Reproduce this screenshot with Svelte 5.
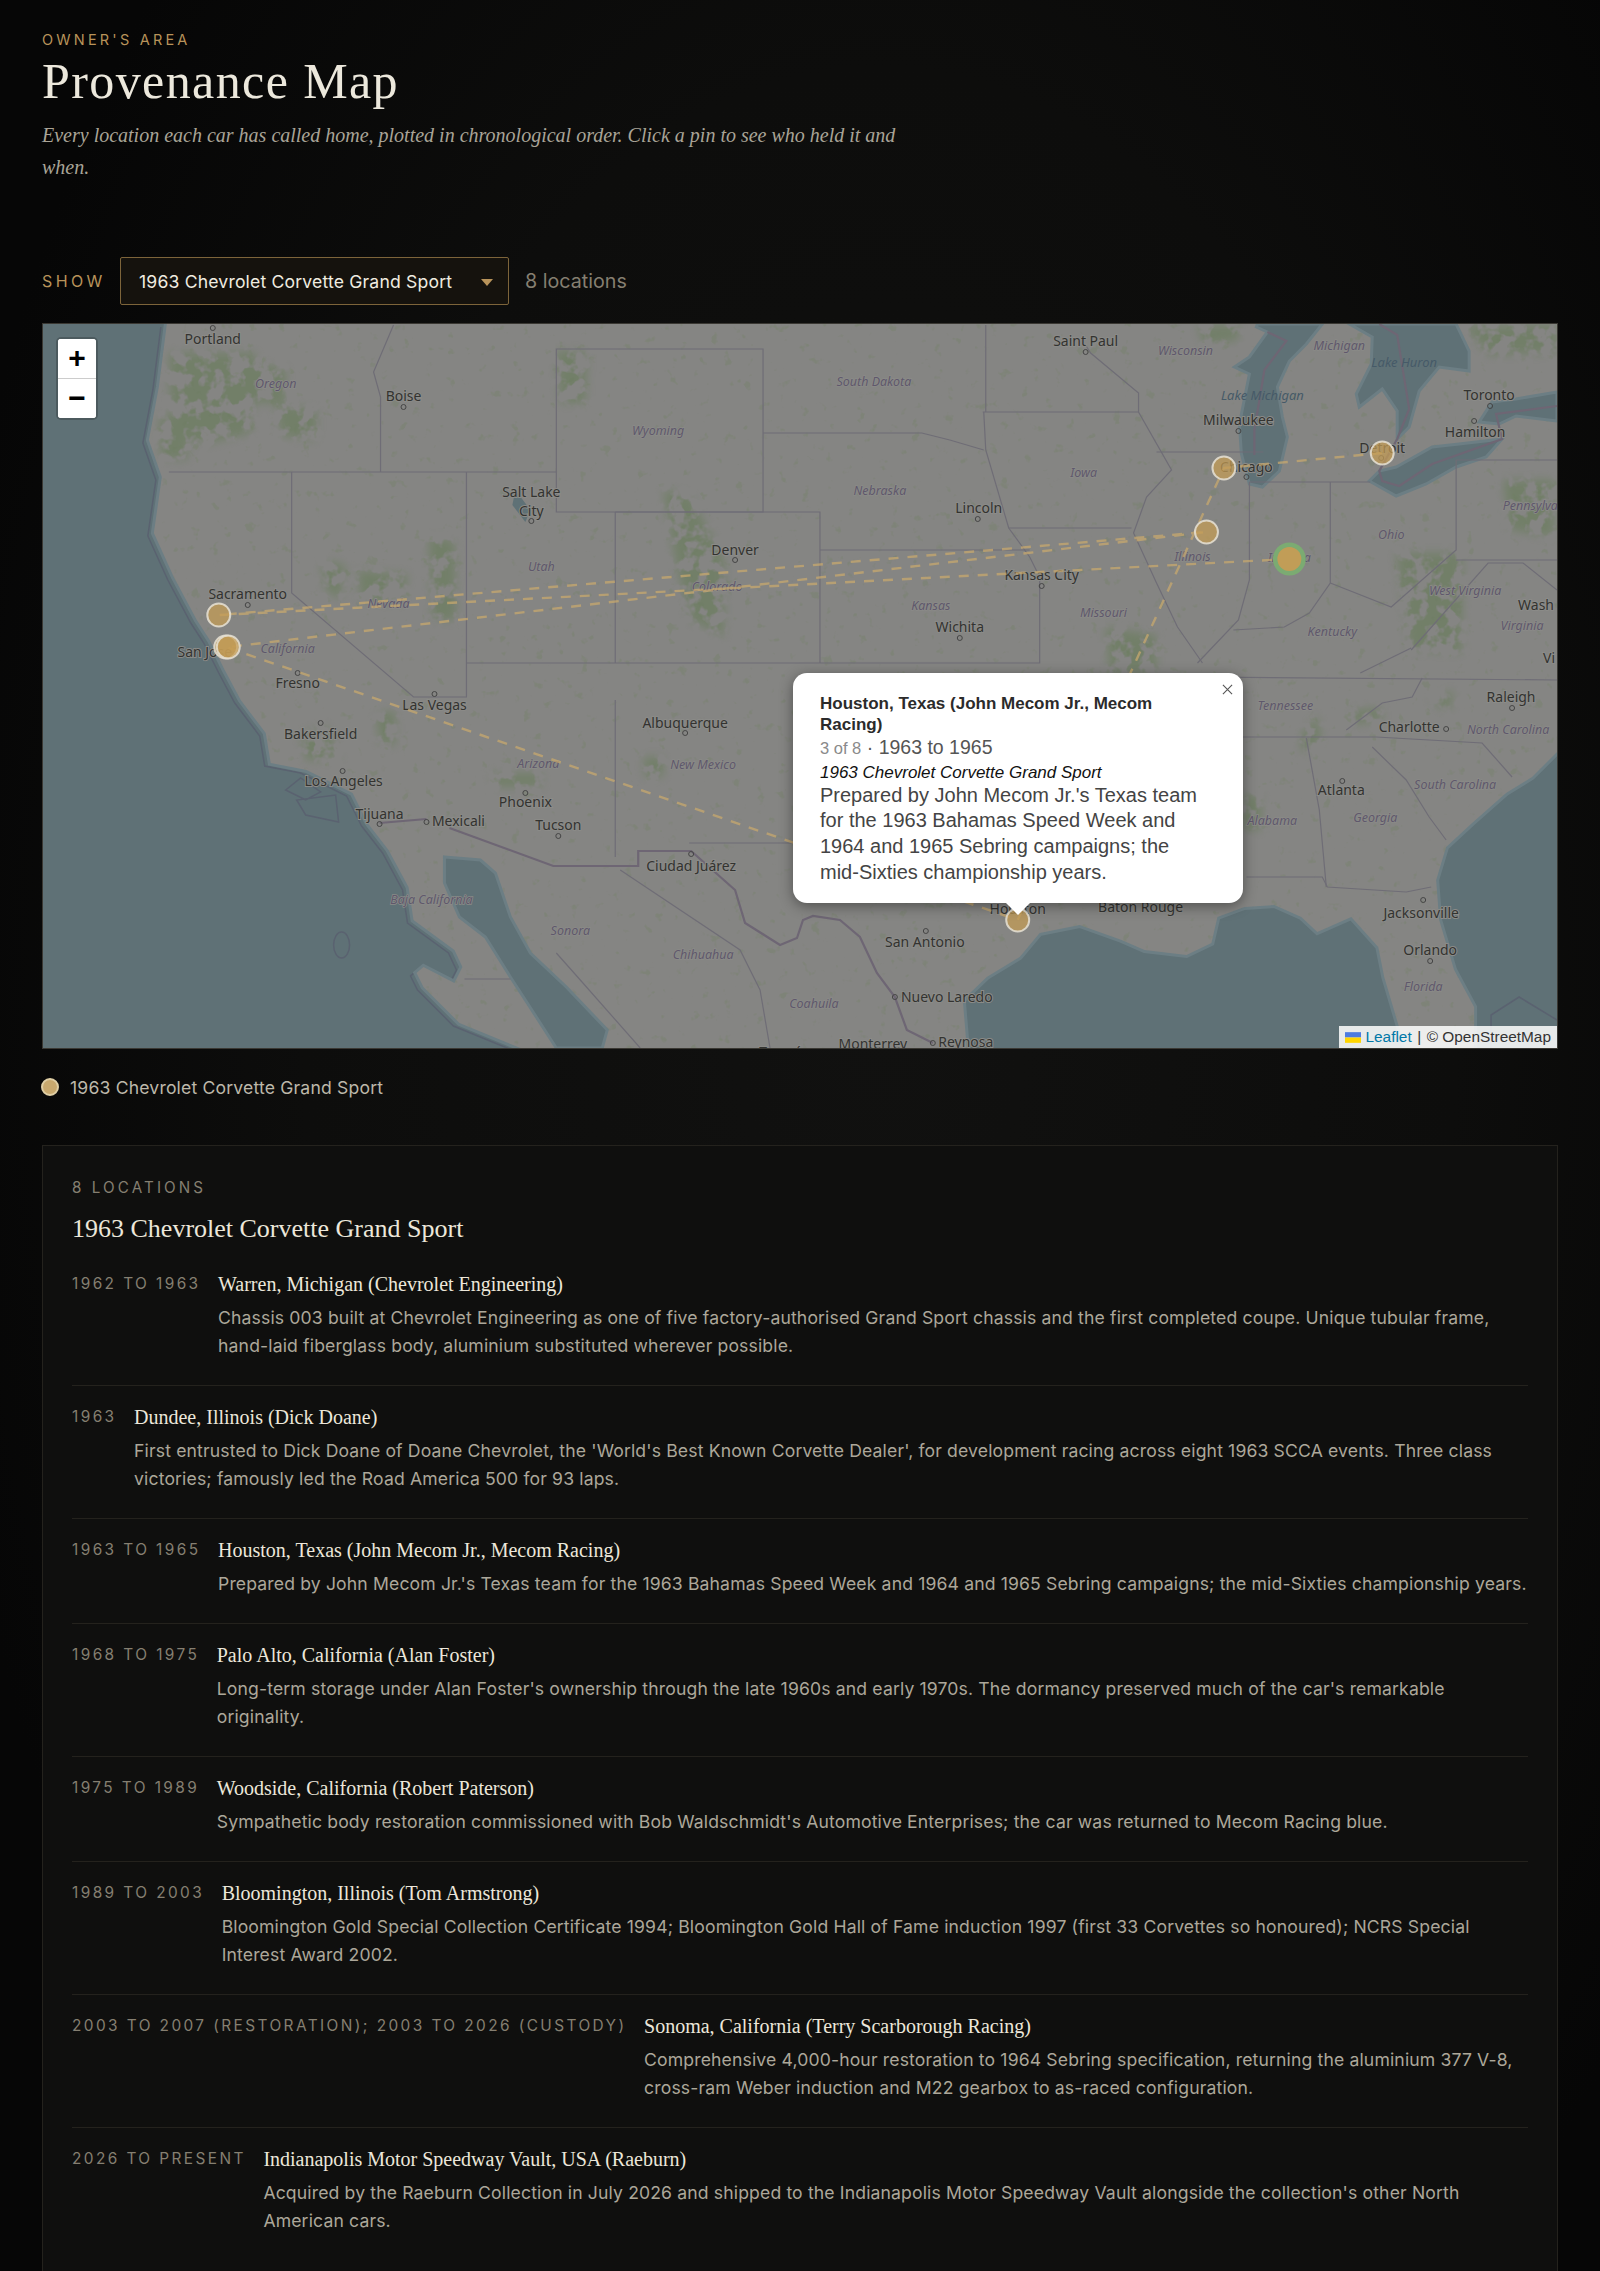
<script>
  const cities = [
    ['Portland',212,340,212,328],['Boise',403,397,403,407],['Salt Lake',531,493,null,null],['City',531,512,531,521],
    ['Denver',735,551,735,560],['Sacramento',247,595,247,605],['San Jose',204,653,null,null],['Fresno',297,684,297,673],
    ['Las Vegas',434,706,434,694],['Bakersfield',320,735,320,723],['Los Angeles',343,782,342,771],['Albuquerque',685,724,685,733],
    ['Phoenix',525,803,525,793],['Tijuana',379,815,379,824],['Mexicali',458,822,426,822],['Tucson',558,826,558,836],
    ['Ciudad Juárez',691,867,691,854],['Saint Paul',1086,342,1086,352],['Toronto',1490,396,1491,406],['Milwaukee',1239,421,1239,431],
    ['Hamilton',1476,433,1475,421],['Detroit',1383,449,1382,458],['Chicago',1247,468,1247,477],['Lincoln',979,509,978,519],
    ['Kansas City',1042,576,1042,586],['Wichita',960,628,960,638],['Raleigh',1512,698,1513,708],['Charlotte',1410,728,1447,729],
    ['Atlanta',1342,791,1343,781],['Baton Rouge',1141,908,null,null],['Houston',1018,910,null,null],['San Antonio',925,943,926,931],
    ['Nuevo Laredo',947,998,895,997],['Reynosa',966,1043,933,1043],['Monterrey',873,1045,null,null],['Jacksonville',1422,914,1424,900],
    ['Orlando',1431,951,1431,961],['Wash',1537,606,null,null],['Vi',1550,659,null,null],['Torreón',785,1053,null,null]
  ];
  const states = [
    ['Oregon',275,385],['Wyoming',658,432],['Utah',541,568],['Colorado',717,588],['Nevada',388,605],['California',287,650],
    ['Arizona',538,765],['New Mexico',703,766],['Baja California',431,901],['Sonora',570,932],['Chihuahua',703,956],['Coahuila',814,1005],
    ['Wisconsin',1186,352],['Michigan',1340,347],['South Dakota',874,383],['Iowa',1084,474],['Nebraska',880,492],['Pennsylvania',1540,507],
    ['Ohio',1392,536],['Illinois',1193,558],['Indiana',1290,559],['West Virginia',1466,592],['Virginia',1523,627],['Kansas',931,607],
    ['Missouri',1104,614],['Kentucky',1333,633],['Tennessee',1286,707],['North Carolina',1509,731],['South Carolina',1456,786],
    ['Alabama',1273,822],['Georgia',1376,819],['Florida',1424,988]
  ];
  const lakeLabels = [['Lake Huron',1405,364],['Lake Michigan',1263,397]];
  const land = 'M166 324L158 387 148 440 161 477 153 533 173 577 196 620 209 640 224 670 240 700 265 733 270 763 306 770 352 793 367 823 388 850 408 887 413 920 454 950 462 967 454 983 423 967 416 973 423 987 459 1023 520 1048H967L963 1000 987 977 1020 957 1040 933 1080 925 1122 940 1145 950 1187 955 1212 943 1218 917 1245 907 1275 905 1302 917 1318 932 1352 917 1379 947 1385 977 1406 1048H1475V1007L1455 970 1440 920 1437 880 1447 847 1473 823 1507 793 1533 777 1558 752V324Z';
  const borders = [
    'M168 472H556','M380 472V397L373 372 393 325','M291 472V593L413 697 466 697V472','M556 349H763V512H556Z','M763 433H922L950 440 984 450',
    'M615 512V663','M466 663H820','M615 512H820V663','M820 550H1030','M820 663H1040V577','M986 325V412','M983 412H1139',
    'M984 412L986 450 1009 528 1030 557 1040 577','M1009 528H1132','M1086 345L1091 353 1139 393V412L1172 470 1147 497 1134 533 1157 583 1178 627 1203 663',
    'M1157 452H1264','M1250 482V580L1239 620 1198 663','M1250 482H1371','M1331 482V583L1310 613 1285 627 1234 630','M1331 583L1392 607 1457 550V460',
    'M1457 560H1558','M1457 460H1558','M1203 677L1558 680','M1412 648L1361 673','M1412 650L1489 563H1524L1558 590',
    'M1240 737H1377L1483 743 1513 777','M1373 747L1407 780 1430 817 1447 840','M1307 738L1320 810 1327 887','M1247 877H1323L1328 887 1407 892 1432 887',
    'M1423 678L1413 697 1383 703 1347 730','M615 700V857','M689 843H800',
    'M770 1048L760 990 740 950 620 870','M556 953L580 980 640 1048','M464 979H510'
  ];
  const intl = [
    'M379 823L426 819','M449 828L553 866H638V851H691L735 890 745 923 780 945 797 938 803 920 813 916 840 920 860 937 877 973 895 997 907 1030 933 1043',
    'M1380 324L1398 335 1410 409 1398 439 1380 471 1383 481 1400 486 1433 464 1503 439 1497 414 1558 406','M1268 332L1287 341 1265 370 1255 430V455'
  ];
  const forests = [
    'M168 353H255L250 433 200 445 170 430Z','M275 403L316 410V440L280 436Z','M250 363L285 368 285 403 250 403Z','M158 417L189 420 186 460 160 458Z',
    'M556 350L587 352 585 403 560 403Z','M663 490L690 495 724 560 724 637 690 620 675 560Z','M428 537L454 540 456 620 432 620Z','M357 570L408 575 400 603 360 600Z',
    'M320 560L345 565 340 600 325 590Z','M1397 553L1463 553 1463 653 1410 650Z','M1504 480H1555V537L1510 530Z','M1463 325H1558V353L1490 355Z',
    'M1106 627L1157 635V673H1110Z','M1198 325H1239V340L1205 345Z','M643 757L663 757V777L645 777Z','M490 773H541V787H495Z',
    'M1355 710L1383 708 1383 720 1350 725Z','M1245 795L1262 795 1262 830 1245 830Z','M1300 738L1318 715 1322 740 1305 755Z','M1430 700L1455 690 1450 712Z','M300 735L325 725 340 760 305 760Z','M375 715L395 710 395 745 380 745Z'
  ];
  const markers = [[1383,453],[1224.5,468],[1018,920],[225,647],[227.5,647],[1207,532],[218,615]];
  const route = 'M1383 453L1224.5 468 1018 920 225 647 227.5 647 1207 532 218 615 1290 559';
  const entries = [
    ['1962 to 1963','Warren, Michigan (Chevrolet Engineering)','Chassis 003 built at Chevrolet Engineering as one of five factory-authorised Grand Sport chassis and the first completed coupe. Unique tubular frame, hand-laid fiberglass body, aluminium substituted wherever possible.'],
    ['1963','Dundee, Illinois (Dick Doane)',"First entrusted to Dick Doane of Doane Chevrolet, the 'World's Best Known Corvette Dealer', for development racing across eight 1963 SCCA events. Three class victories; famously led the Road America 500 for 93 laps."],
    ['1963 to 1965','Houston, Texas (John Mecom Jr., Mecom Racing)',"Prepared by John Mecom Jr.'s Texas team for the 1963 Bahamas Speed Week and 1964 and 1965 Sebring campaigns; the mid-Sixties championship years."],
    ['1968 to 1975','Palo Alto, California (Alan Foster)',"Long-term storage under Alan Foster's ownership through the late 1960s and early 1970s. The dormancy preserved much of the car's remarkable originality."],
    ['1975 to 1989','Woodside, California (Robert Paterson)',"Sympathetic body restoration commissioned with Bob Waldschmidt's Automotive Enterprises; the car was returned to Mecom Racing blue."],
    ['1989 to 2003','Bloomington, Illinois (Tom Armstrong)','Bloomington Gold Special Collection Certificate 1994; Bloomington Gold Hall of Fame induction 1997 (first 33 Corvettes so honoured); NCRS Special Interest Award 2002.'],
    ['2003 to 2007 (restoration); 2003 to 2026 (custody)','Sonoma, California (Terry Scarborough Racing)','Comprehensive 4,000-hour restoration to 1964 Sebring specification, returning the aluminium 377 V-8, cross-ram Weber induction and M22 gearbox to as-raced configuration.'],
    ['2026 to present','Indianapolis Motor Speedway Vault, USA (Raeburn)',"Acquired by the Raeburn Collection in July 2026 and shipped to the Indianapolis Motor Speedway Vault alongside the collection's other North American cars."]
  ];
</script>

<div class="page">
  <header class="head">
    <div class="eyebrow">OWNER'S AREA</div>
    <h1>Provenance Map</h1>
    <p class="lede">Every location each car has called home, plotted in chronological order. Click a pin to see who held it and when.</p>
  </header>

  <div class="controls">
    <label class="show" for="car">SHOW</label>
    <span class="select-wrap">
      <select id="car"><option>1963 Chevrolet Corvette Grand Sport</option></select>
      <span class="caret"></span>
    </span>
    <span class="count">8 locations</span>
  </div>

  <div class="map">
    <svg class="tiles" viewBox="42 324 1516 724" preserveAspectRatio="none" aria-hidden="true">
      <defs>
        <filter id="mottle" x="-10%" y="-10%" width="120%" height="120%" color-interpolation-filters="sRGB">
          <feGaussianBlur in="SourceAlpha" stdDeviation="5" result="b"/>
          <feTurbulence type="fractalNoise" baseFrequency=".07" numOctaves="3" seed="4" result="n"/>
          <feColorMatrix in="n" type="matrix" values="0 0 0 0 .42  0 0 0 0 .49  0 0 0 0 .37  0 0 0 7 -2.9" result="m"/>
          <feComposite in="m" in2="b" operator="in"/>
        </filter>
        <filter id="speck" x="0" y="0" width="100%" height="100%" color-interpolation-filters="sRGB">
          <feTurbulence type="fractalNoise" baseFrequency=".09" numOctaves="3" seed="11" result="n"/>
          <feColorMatrix in="n" type="matrix" values="0 0 0 0 .46  0 0 0 0 .51  0 0 0 0 .41  0 0 0 9 -6.1" result="m"/>
          <feComposite in="m" in2="SourceAlpha" operator="in"/>
        </filter>
      </defs>
      <rect x="42" y="324" width="1516" height="724" fill="#5f7176"/>
      <g fill="none" stroke="#5a6270" stroke-width="1.5">
        <path transform="translate(-6 3)" d="M166 324L158 387 148 440 161 477 153 533 173 577 196 620 209 640 224 670 240 700 265 733 270 763 306 770 352 793 367 823 388 850 408 887 413 920 454 950 462 967 454 983 423 967 416 973 423 987 459 1023 520 1048"/>
        <ellipse cx="341" cy="945" rx="8" ry="13"/>
        <path d="M1492 1048V1015L1520 997 1558 1020"/>
        <path d="M285 790L300 778 320 792 305 800Z M296 800L305 815 338 822 335 795Z"/>
      </g>
      <path fill="#6c7e84" stroke="#6c7e84" stroke-width="6" d={land}/>
      <path fill="#858583" d={land}/>
      <path d={land} filter="url(#speck)" opacity=".4"/>
      <g filter="url(#mottle)" opacity=".72">
        {#each forests as d}<path {d}/>{/each}
      </g>
      <g fill="#5f7176" stroke="#6c7e84" stroke-width="3">
        <path d="M444 857L480 860 495 873 510 917 530 953 566 987 607 1030 602 1048H556L525 1000 510 977 485 937 459 917 444 883Z"/>
        <path d="M1258 324L1257 327 1268 332 1250 357 1235 367 1250 374 1240 424 1242 454 1250 484 1263 487 1280 471 1288 437 1283 417 1278 387 1290 361 1307 344 1323 324Z"/>
        <path d="M1350 324L1373 337 1372 364 1357 394 1360 407 1383 389 1398 411 1398 439 1410 427 1420 391 1440 367 1470 371 1470 351 1457 324Z"/>
        <path d="M1370 481L1380 471 1397 467 1433 447 1460 444 1503 439 1487 457 1457 467 1427 484 1397 496Z"/>
        <path d="M1480 422L1493 402 1517 399 1558 392V421L1517 416 1500 424Z"/>
        <path d="M515 490L530 510 525 522 512 505Z" stroke="none"/>
      </g>
      <g fill="none" stroke="#6f6d76" stroke-width="1.2">
        {#each borders as d}<path {d}/>{/each}
      </g>
      <g fill="none" stroke="#6e6674" stroke-width="2.2">
        {#each intl as d}<path {d}/>{/each}
      </g>
      <g>
        {#each cities as [name, x, y, dx, dy]}
          {#if dx !== null}<circle class="dot" cx={dx} cy={dy} r="2.5"/>{/if}
          <text class="city" {x} {y}>{name}</text>
        {/each}
        {#each states as [name, x, y]}<text class="state" {x} {y}>{name}</text>{/each}
        {#each lakeLabels as [name, x, y]}<text class="lake" {x} {y}>{name}</text>{/each}
      </g>
      <path class="route" d={route}/>
      <circle class="goal" cx="1290" cy="559" r="16.5"/>
      <circle class="pin-top" cx="1290" cy="559" r="12"/>
      {#each markers as [cx, cy]}<circle class="pin" {cx} {cy} r="11.5"/>{/each}
    </svg>

    <div class="zoom">
      <button type="button" aria-label="Zoom in">+</button>
      <button type="button" aria-label="Zoom out">−</button>
    </div>

    <div class="popup">
      <svg class="close" viewBox="0 0 12 12" aria-hidden="true"><path d="M1 1L11 11M11 1L1 11"/></svg>
      <strong>Houston, Texas (John Mecom Jr., Mecom Racing)</strong>
      <div class="sub"><span class="nth">3 of 8</span> · 1963 to 1965</div>
      <em>1963 Chevrolet Corvette Grand Sport</em>
      <p>Prepared by John Mecom Jr.'s Texas team for the 1963 Bahamas Speed Week and 1964 and 1965 Sebring campaigns; the mid-Sixties championship years.</p>
      <span class="tip"></span>
    </div>

    <div class="attrib">
      <svg class="flag" viewBox="0 0 12 8" aria-hidden="true"><rect width="12" height="4" fill="#4c7be1"/><rect y="4" width="12" height="4" fill="#ffd500"/></svg>
      <span class="leaflet">Leaflet</span><span class="sep">|</span><span>© OpenStreetMap</span>
    </div>
  </div>

  <div class="legend"><span class="swatch"></span>1963 Chevrolet Corvette Grand Sport</div>

  <section class="panel">
    <div class="panel-label">8 LOCATIONS</div>
    <h2>1963 Chevrolet Corvette Grand Sport</h2>
    {#each entries as [date, place, desc]}
      <div class="row">
        <div class="date">{date}</div>
        <div class="body">
          <div class="place">{place}</div>
          <p class="desc">{desc}</p>
        </div>
      </div>
    {/each}
  </section>
</div>

<style>
  :global(body) { margin: 0; background: #070707; }
  .page {
    height: 2271px;
    overflow: hidden;
    box-sizing: border-box;
    padding: 30px 42px 0;
    font-family: Inter, "Liberation Sans", sans-serif;
    background: radial-gradient(ellipse 60% 70% at 55% 45%, #111110 0%, #0d0d0c 60%, #060606 100%);
  }
  .eyebrow { font-size: 14.5px; line-height: 20px; letter-spacing: 3.2px; color: #b8935a; }
  h1 {
    margin: 0;
    font: 400 50px/62px "Liberation Serif", serif;
    letter-spacing: 1.4px;
    color: #ece8dc;
  }
  .lede {
    margin: 7px 0 0;
    width: 880px;
    font: italic 400 20px/32px "Liberation Serif", serif;
    color: #a9a497;
  }
  .controls { display: flex; align-items: center; margin-top: 74px; height: 48px; }
  .show { font-size: 16px; letter-spacing: 3.4px; color: #b8935a; width: 78px; }
  .select-wrap { position: relative; display: block; width: 389px; height: 48px; }
  select {
    appearance: none;
    width: 100%;
    height: 100%;
    box-sizing: border-box;
    padding: 0 18px;
    border: 1px solid #7d643a;
    border-radius: 2px;
    background: #15120d;
    color: #f0ece0;
    font: 400 17.6px Inter, sans-serif;
    letter-spacing: .17px;
  }
  .caret {
    position: absolute;
    right: 16px;
    top: 22px;
    border-left: 6px solid transparent;
    border-right: 6px solid transparent;
    border-top: 7px solid #b8935a;
    pointer-events: none;
  }
  .count { margin-left: 16px; font-size: 19.7px; color: #857f71; }
  .map {
    position: relative;
    margin-top: 18px;
    height: 726px;
    width: 1516px;
    box-sizing: border-box;
    border: 1px solid #3a3833;
    overflow: hidden;
  }
  .tiles { display: block; width: 100%; height: 100%; }
  .city {
    font: 400 14px "Noto Sans", sans-serif;
    fill: #333330;
    text-anchor: middle;
    dominant-baseline: middle;
    paint-order: stroke;
    stroke: #8b8b88;
    stroke-width: 2px;
  }
  .state {
    font: italic 400 12.5px "Noto Sans", sans-serif;
    fill: #5f586c;
    text-anchor: middle;
    dominant-baseline: middle;
    paint-order: stroke;
    stroke: #8b8b88;
    stroke-width: 1.5px;
  }
  .lake {
    font: italic 400 13px "Noto Sans", sans-serif;
    fill: #465a68;
    text-anchor: middle;
    dominant-baseline: middle;
  }
  .dot { fill: none; stroke: #444; stroke-width: 1; }
  .route { fill: none; stroke: #c9a96e; stroke-width: 2.4; stroke-dasharray: 10 9; opacity: .72; }
  .pin { fill: #c59c55; fill-opacity: .72; stroke: #e6e2d6; stroke-opacity: .85; stroke-width: 2; }
  .pin-top { fill: #c59c55; fill-opacity: .95; }
  .goal { fill: #7bab72; }
  .zoom {
    position: absolute;
    left: 15px;
    top: 15px;
    width: 38px;
    border-radius: 3px;
    overflow: hidden;
    background: #fff;
    box-shadow: 0 0 0 2px rgba(0,0,0,.2);
  }
  .zoom button {
    display: block;
    width: 38px;
    height: 39.5px;
    padding: 0;
    border: 0;
    background: #fff;
    color: #000;
    font: 700 30px/38px "Liberation Sans", sans-serif;
  }
  .zoom button:first-child { border-bottom: 1px solid #ccc; }
  .popup {
    position: absolute;
    left: 750px;
    top: 349px;
    width: 450px;
    height: 230px;
    box-sizing: border-box;
    padding: 19.5px 40px 0 27px;
    border-radius: 14px;
    background: #fff;
    box-shadow: 0 3px 14px rgba(0,0,0,.4);
    font-family: "Liberation Sans", Arial, sans-serif;
    color: #333;
  }
  .popup strong { display: block; font-size: 17px; line-height: 21px; color: #2b2b2b; }
  .sub { font-size: 19.5px; line-height: 28px; color: #555; margin-top: -1.5px; }
  .nth { font-size: 16.5px; color: #8a8a8a; }
  .popup em { display: block; font-size: 17px; line-height: 20px; color: #111; margin-top: .5px; }
  .popup p { margin: 0; font-size: 20px; line-height: 25.8px; color: #444; }
  .close { position: absolute; right: 10px; top: 11px; width: 11px; height: 11px; }
  .close path { stroke: #555; stroke-width: 1.2; fill: none; }
  .tip {
    position: absolute;
    left: 213px;
    bottom: -12px;
    width: 0;
    height: 0;
    border-left: 12px solid transparent;
    border-right: 12px solid transparent;
    border-top: 12px solid #fff;
  }
  .attrib {
    position: absolute;
    right: 0;
    bottom: 0;
    display: flex;
    align-items: center;
    height: 22px;
    padding: 0 6px;
    background: rgba(255,255,255,.85);
    font: 15.4px/22px "Liberation Sans", sans-serif;
    color: #333;
  }
  .flag { width: 16px; height: 11px; margin-right: 5px; }
  .leaflet { color: #0078a8; }
  .sep { margin: 0 5.5px; }
  .legend {
    display: flex;
    align-items: center;
    gap: 11px;
    margin-top: 28px;
    height: 20px;
    font-size: 17.6px;
    letter-spacing: .17px;
    color: #bdb8aa;
  }
  .swatch {
    width: 14px;
    height: 14px;
    border: 2px solid #e0cfa5;
    border-radius: 50%;
    background: #c9a96e;
    margin-left: -1px;
  }
  .panel {
    margin: 48px 0 0 0;
    padding: 30.5px 29px 100px;
    height: 1200px;
    border: 1px solid #24221d;
    background: #0f0f0e;
  }
  .panel-label { font-size: 15.2px; line-height: 22px; letter-spacing: 3.1px; color: #857f71; }
  h2 {
    margin: 12px 0 0;
    font: 400 26px/36px "Liberation Serif", serif;
    color: #ece7da;
  }
  .row {
    display: flex;
    gap: 17.5px;
    padding: 17px 0 25px;
    border-bottom: 1px solid #24221d;
  }
  h2 + .row { padding-top: 23.5px; }
  .row:last-child { border-bottom: 0; }
  .date {
    flex: none;
    margin-top: 3.5px;
    font-size: 15.4px;
    line-height: 20px;
    letter-spacing: 2.42px;
    text-transform: uppercase;
    color: #857f71;
  }
  .body { flex: 1; min-width: 0; }
  .place { font: 400 20px/20px "Liberation Serif", serif; color: #ece7da; margin-top: 3.5px; margin-bottom: -3.5px; }
  .desc { margin: 14px 0 0; font-size: 17.6px; letter-spacing: .14px; line-height: 28px; color: #aca79a; }
</style>
